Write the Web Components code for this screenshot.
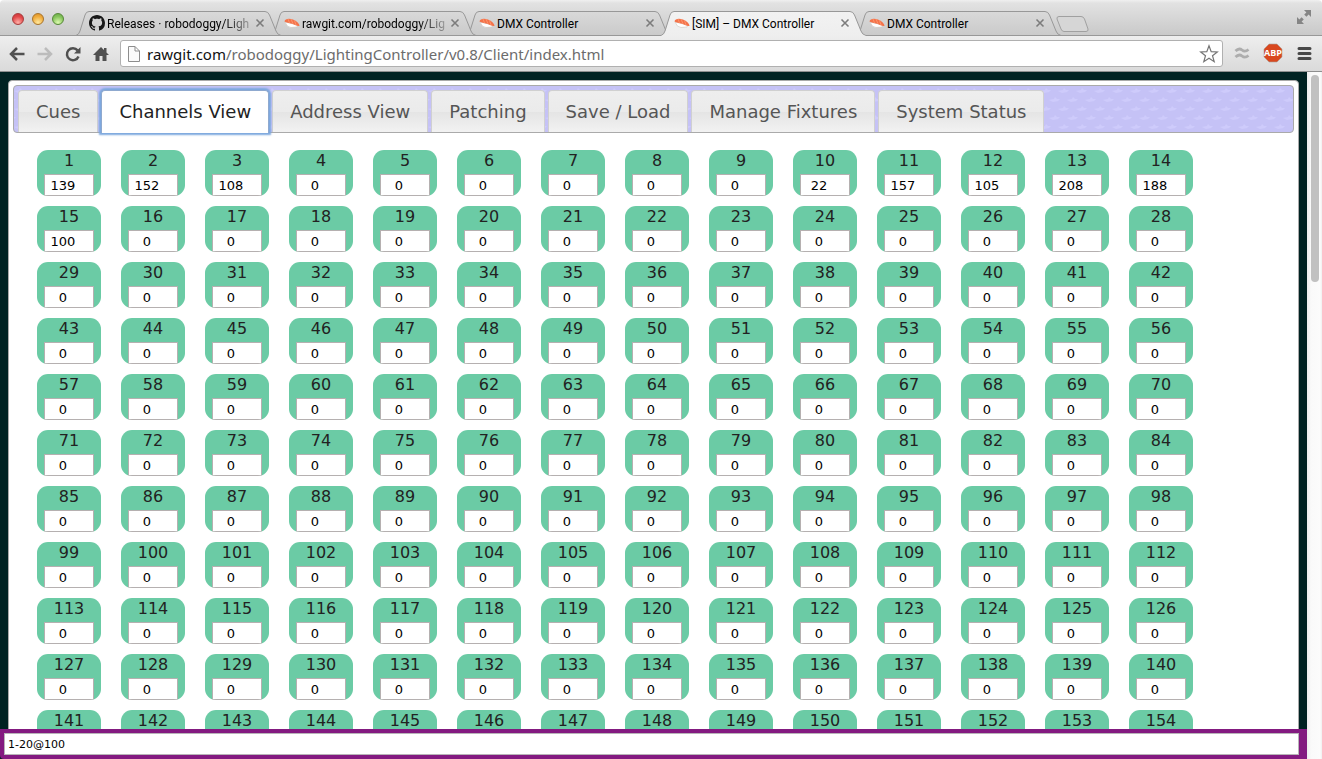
<!DOCTYPE html>
<html lang="en">
<head>
<meta charset="utf-8">
<title>[SIM] - DMX Controller</title>
<style>
  html, body { margin: 0; height: 100%; overflow: hidden; }
  body { font-family: "DejaVu Sans", Verdana, sans-serif; }
</style>
</head>
<body>
<browser-window>
  <tab-strip slot="tabs">
    <browser-tab icon="github" label="Releases · robodoggy/Ligh"></browser-tab>
    <browser-tab icon="sushi" label="rawgit.com/robodoggy/Lig"></browser-tab>
    <browser-tab icon="sushi" label="DMX Controller"></browser-tab>
    <browser-tab icon="sushi" label="[SIM] – DMX Controller" active></browser-tab>
    <browser-tab icon="sushi" label="DMX Controller"></browser-tab>
  </tab-strip>
  <browser-toolbar slot="toolbar"><b>rawgit.com</b>/robodoggy/LightingController/v0.8/Client/index.html</browser-toolbar>
  <dmx-panel>
    <dmx-nav slot="nav">
      <dmx-nav-tab>Cues</dmx-nav-tab>
      <dmx-nav-tab active>Channels View</dmx-nav-tab>
      <dmx-nav-tab>Address View</dmx-nav-tab>
      <dmx-nav-tab>Patching</dmx-nav-tab>
      <dmx-nav-tab>Save / Load</dmx-nav-tab>
      <dmx-nav-tab>Manage Fixtures</dmx-nav-tab>
      <dmx-nav-tab>System Status</dmx-nav-tab>
    </dmx-nav>
    <channel-grid count="154" values="139,152,108,0,0,0,0,0,0,22,157,105,208,188,100"></channel-grid>
  </dmx-panel>
  <command-line slot="command" value="1-20@100"></command-line>
</browser-window>

<script>
const define = (name, html, setup) => {
  const template = document.createElement('template');
  template.innerHTML = '<style>:host,*{box-sizing:border-box}</style>' + html;
  customElements.define(name, class extends HTMLElement {
    connectedCallback() {
      if (this.shadowRoot) return;
      this.attachShadow({ mode: 'open' }).append(template.content.cloneNode(true));
      if (setup) setup(this, this.shadowRoot);
    }
  });
};

define('browser-window', `
<style>
  :host { display: flex; flex-direction: column; height: 100vh; background: #fff; }
  .view { flex: 1; min-height: 0; display: flex; }
  .page { flex: 1; min-width: 0; display: flex; flex-direction: column; background: #002222; }
  .content { flex: 1; min-height: 0; overflow: hidden; padding: 8px 8px 0; }
  .scroll { flex: none; width: 15px; padding: 3px 3px 3px 4px; background: linear-gradient(90deg, #ededed, #fafafa 4px, #fcfcfc 13px, #f0f0f0); }
  .thumb { height: 30.4%; border-radius: 4px; background: #c1c1c1; }
</style>
<slot name="tabs"></slot>
<slot name="toolbar"></slot>
<div class="view">
  <div class="page">
    <main class="content"><slot></slot></main>
    <slot name="command"></slot>
  </div>
  <div class="scroll"><div class="thumb"></div></div>
</div>`);

define('tab-strip', `
<style>
  :host { display: flex; flex: none; height: 36px; padding: 11px 10px 0 12px; border-bottom: 1px solid #989898;
    border-radius: 4px 4px 0 0; background: linear-gradient(#f0f0f0, #e2e2e2 3px, #c9c9c9); }
  .lights { display: flex; gap: 8px; flex: none; width: 64px; padding-top: 2px; }
  .lights button { width: 12px; height: 12px; padding: 0; border-radius: 50%; border: 1px solid; }
  .close { background: radial-gradient(circle at 50% 85%, #ffb0a8, #e2484a 60%, #c93438); border-color: #a63c3c !important; }
  .min { background: radial-gradient(circle at 50% 85%, #ffe9a0, #f0ac3c 60%, #d98e28); border-color: #a8742c !important; }
  .max { background: radial-gradient(circle at 50% 85%, #ddfab0, #86c45c 60%, #68a846); border-color: #568838 !important; }
  .new { flex: none; width: 34px; height: 18px; margin: 4px 0 0 4px; padding: 0; border: 0; background: none; }
  .full { flex: none; width: 16px; height: 16px; margin: -2px 0 0 auto; padding: 0; border: 0; background: none; }
  svg { display: block; }
</style>
<div class="lights"><button class="close" aria-label="Close window"></button><button class="min" aria-label="Minimise"></button><button class="max" aria-label="Zoom"></button></div>
<slot></slot>
<button class="new" aria-label="New tab"><svg width="34" height="18"><path d="M4 1.500H26Q28.500 1.500 29.500 4L33 14Q33.500 16.500 31 16.500H9Q7 16.500 6 14L2 4Q1.500 1.500 4 1.500Z" fill="#d6d6d6" stroke="#a0a0a0"/></svg></button>
<button class="full" aria-label="Full screen"><svg width="16" height="16" fill="#858585"><path d="M8 1H15V8L12.600 5.600L10.400 7.800L8.200 5.600L10.400 3.400ZM1 8L3.400 10.400L5.600 8.200L7.800 10.400L5.600 12.600L8 15H1Z"/></svg></button>`);

const favicons = {
  github: '<svg viewBox="0 0 16 16" width="16" height="16"><path fill="#181818" d="M8 0C3.580 0 0 3.580 0 8c0 3.540 2.290 6.530 5.470 7.590.4.070.550-.170.550-.380 0-.190-.010-.820-.010-1.490-2.010.370-2.530-.490-2.690-.940-.090-.230-.480-.940-.820-1.130-.280-.150-.680-.520-.010-.530.630-.010 1.080.580 1.230.820.720 1.210 1.870.870 2.330.660.070-.520.280-.870.510-1.070-1.780-.2-3.640-.890-3.640-3.950 0-.870.310-1.590.820-2.150-.080-.2-.360-1.020.080-2.120 0 0 .670-.210 2.200.820.640-.180 1.320-.270 2-.270s1.360.090 2 .270c1.530-1.040 2.200-.820 2.200-.820.440 1.100.160 1.920.080 2.120.510.560.820 1.270.820 2.150 0 3.070-1.870 3.750-3.650 3.950.290.250.540.730.540 1.480 0 1.070-.010 1.930-.010 2.200 0 .210.150.460.550.380A8.010 8.010 0 0 0 16 8c0-4.420-3.580-8-8-8z"/></svg>',
  sushi: '<svg viewBox="0 0 16 16" width="16" height="16"><path fill="#fff" stroke="#c9c4bd" stroke-width=".6" d="M1 7Q3 12.500 7 12.500L13 12L14 10Z"/><path fill="#f4734a" d="M.5 6.500C1 3.500 5 3 9 4.500S15.500 9 15.500 11C13 11.500 11 9.800 8 8.800S2.500 8 .5 6.500Z"/><path stroke="#ff9a74" stroke-width=".8" fill="none" d="M4 4L5.500 8M7 4L9 8.800M10.500 5.500L12 10"/></svg>'
};

define('browser-tab', `
<style>
  :host { position: relative; display: flex; flex: 0 1 195px; min-width: 0; height: 25px; padding: 0 0 0 13px; z-index: 1;
    font: 12px/24px Roboto, "Noto Sans", sans-serif; color: #000; }
  .shape { position: absolute; left: -1px; top: 0; z-index: -1; }
  .icon { flex: none; width: 18px; padding-top: 4px; }
  .icon svg { display: block; }
  .label { flex: 1; min-width: 0; overflow: hidden; white-space: nowrap; line-height: 26px; }
  .fade { -webkit-mask-image: linear-gradient(90deg, #000 116px, transparent 152px); mask-image: linear-gradient(90deg, #000 116px, transparent 152px); }
  .x { flex: none; width: 10px; height: 25px; margin: 0 6px 0 0; padding: 0; border: 0; background: none; }
</style>
<svg class="shape" width="208" height="25"><defs><linearGradient id="g" x2="0" y2="1"><stop class="a" stop-color="#d9d9d9"/><stop class="b" offset="1" stop-color="#cacaca"/></linearGradient></defs>
<path class="fill" fill="url(#g)" d="M1 25V24Q4 23.500 5 20L10 4Q11 .5 14 .5H190Q193 .5 194.500 4L201 20Q202 23.500 206 24V25Z"/>
<path class="line" fill="none" stroke="#989898" d="M1 24.500Q4 23.500 5 20L10 4Q11 .5 14 .5H190Q193 .5 194.500 4L201 20Q202 23.500 206 24.500"/></svg>
<span class="icon"></span><span class="label"></span>
<button class="x" aria-label="Close tab"><svg width="10" height="10"><path d="M1.500 1.500L8.500 8.500M8.500 1.500L1.500 8.500" stroke="#7c7c7c" stroke-width="1.600"/></svg></button>`,
(host, root) => {
  const text = host.getAttribute('label');
  const label = root.querySelector('.label');
  root.querySelector('.icon').innerHTML = favicons[host.getAttribute('icon')];
  label.textContent = text;
  label.classList.toggle('fade', text.length > 22);
  const active = host.hasAttribute('active');
  host.style.zIndex = active ? 9 : 8 - [...host.parentNode.children].indexOf(host);
  if (active) {
    root.querySelector('.a').setAttribute('stop-color', '#f2f2f2');
    root.querySelector('.b').setAttribute('stop-color', '#eeeeee');
  } else {
    root.querySelector('.line').setAttribute('d', root.querySelector('.line').getAttribute('d') + 'H1');
  }
});

define('browser-toolbar', `
<style>
  :host { display: flex; flex: none; align-items: center; gap: 11px; height: 36px; padding: 0 10px 0 9px; border-bottom: 1px solid #8f8f8f;
    background: linear-gradient(#eeeeee, #dadada); }
  button { display: block; flex: none; width: 16px; height: 16px; padding: 0; border: 0; background: none; }
  svg { display: block; overflow: visible; }
  .box { flex: 1; min-width: 0; display: flex; align-items: center; height: 27px; padding: 0 4px 0 5px; border: 1px solid #b0b0b0; border-radius: 3px; background: #fff; }
  .url { flex: 1; min-width: 0; padding-left: 5px; overflow: hidden; white-space: nowrap; font: 15px/24px "Noto Sans", "Open Sans", sans-serif; color: #6c6c6c; }
  ::slotted(b) { color: #111; font-weight: normal; }
  .star { width: 18px; height: 18px; }
  .tools { gap: 13px; }
  .abp { width: 20px; height: 20px; margin-top: -2px; }
  nav { display: flex; gap: 12px; }
</style>
<nav>
<button aria-label="Back"><svg width="16" height="16"><path d="M15.500 8H2M8 2L2 8L8 14" fill="none" stroke="#505050" stroke-width="2.500"/></svg></button>
<button aria-label="Forward"><svg width="16" height="16"><path d="M.5 8H14M8 2L14 8L8 14" fill="none" stroke="#bcbcbc" stroke-width="2.500"/></svg></button>
<button aria-label="Reload"><svg width="16" height="16"><path d="M12.600 4.400A6 6 0 1 0 13.500 10.500" fill="none" stroke="#505050" stroke-width="2.500"/><path d="M15.500 1V7.500H9Z" fill="#505050"/></svg></button>
<button aria-label="Home"><svg width="16" height="16"><path d="M8 1L11 4V2H13.500V6.500L16 9H13.500V15H9.500V10H6.500V15H2.500V9H0Z" fill="#505050"/></svg></button>
</nav>
<div class="box">
  <svg width="16" height="18"><path d="M2.500 1.500H9L13.500 6V16.500H2.500ZM9 1.500V6H13.500" fill="#fafafa" stroke="#8d8d8d"/></svg>
  <span class="url"><slot></slot></span>
  <button class="star" aria-label="Bookmark"><svg width="18" height="18"><path d="M9 .8L11.200 6.600L17.300 6.900L12.500 10.700L14.200 16.700L9 13.300L3.800 16.700L5.500 10.700L.7 6.900L6.800 6.600Z" fill="#fff" stroke="#757575" stroke-width="1.200"/></svg></button>
</div>
<nav class="tools">
<button aria-label="Extension"><svg width="16" height="16"><path d="M1.500 6Q5 2.500 8 5T14.500 4.500M1.500 12Q5 8.500 8 11T14.500 10.500" fill="none" stroke="#adadad" stroke-width="2.800"/></svg></button>
<button class="abp" aria-label="Adblock Plus"><svg width="20" height="20"><path d="M6 1H14L19 6V14L14 19H6L1 14V6Z" fill="#d9481f" stroke="#a9a29c" stroke-width=".6"/><text x="10" y="13" text-anchor="middle" font-family="Open Sans" font-weight="bold" font-size="9" fill="#fff">ABP</text></svg></button>
<button aria-label="Menu"><svg width="16" height="16"><path d="M3 3.500H14M3 8.500H14M3 13.500H14" stroke="#484848" stroke-width="3" stroke-linecap="round"/></svg></button>
</nav>`);

define('dmx-panel', `
<style>
  :host { display: block; padding: 4px; border: 1px solid #aaa; border-radius: 4px; background: #fff; color: #222; }
  .body { padding: 17px 20px 17px 24px; }
</style>
<slot name="nav"></slot>
<div class="body"><slot></slot></div>`);

define('dmx-nav', `
<style>
  :host { display: flex; gap: 3px; height: 48px; padding: 4px 4px 0; border: 1px solid #aaa; border-radius: 4px;
    background: #c5c2f6 url("data:image/svg+xml,%3Csvg xmlns='http://www.w3.org/2000/svg' width='18' height='18'%3E%3Cpath d='M0 5L5 4L6 2L8 4L11 4L9 6L4 7ZM9 14L14 13L15 11L17 13L20 13L18 15L13 16ZM-9 14L-4 13L-3 11L-1 13L2 13L0 15L-5 16Z' fill='%23cecbfb'/%3E%3C/svg%3E"); }
</style>
<slot></slot>`);

define('dmx-nav-tab', `
<style>
  :host { display: block; height: 42px; }
  button { display: block; height: 42px; padding: 0 17px; border: 1px solid #d0d0d0; border-bottom: 0; border-radius: 4px 4px 0 0; white-space: nowrap;
    font: 18px/40px "DejaVu Sans", Verdana, sans-serif; color: #555; background: linear-gradient(#eeeeee, #ebebeb 50%, #e4e4e4 50%, #f2f2f2); }
  :host([active]) { position: relative; }
  :host([active]) button { height: 43px; background: #fff; color: #222; border-color: #8fa9cf; box-shadow: 0 0 2px 2px #7ba7de; }
</style>
<button><slot></slot></button>`);

define('channel-grid', `
<style>:host { display: flex; flex-wrap: wrap; gap: 10px 20px; }</style>`,
(host, root) => {
  const values = host.getAttribute('values').split(',');
  for (let i = 1; i <= +host.getAttribute('count'); i++) {
    const tile = document.createElement('channel-tile');
    tile.setAttribute('channel', i);
    tile.setAttribute('value', values[i - 1] || 0);
    root.append(tile);
  }
});

define('channel-tile', `
<style>
  :host { display: flex; flex-direction: column; align-items: center; width: 64px; height: 46px; border-radius: 11px; overflow: hidden; background: #6bcba5; color: #222; }
  label { font-size: 16px; line-height: 22px; height: 24px; }
  input { flex: none; width: 50px; height: 22px; margin: 0; padding: 0 13px 0 1px; border: 1px solid #b5b0b0; border-radius: 0; background: #fff;
    font: 13px/20px "DejaVu Sans", Verdana, sans-serif; text-align: center; color: #000; }
</style>
<label for="v"></label><input id="v" type="text" inputmode="numeric">`,
(host, root) => {
  root.querySelector('label').textContent = host.getAttribute('channel');
  root.querySelector('input').value = host.getAttribute('value');
});

define('command-line', `
<style>
  :host { display: block; flex: none; padding: 4px 8px 4px 4px; background: #831a80; border-radius: 0 0 0 4px; }
  input { display: block; width: 100%; height: 22px; margin: 0; padding: 1px 3px 0; border: 1px solid #b8b4b8; border-radius: 0; background: #fff;
    font: 11px/18px "DejaVu Sans", Verdana, sans-serif; color: #000; }
</style>
<input type="text" aria-label="Command">`,
(host, root) => { root.querySelector('input').value = host.getAttribute('value'); });
</script>
</body>
</html>
